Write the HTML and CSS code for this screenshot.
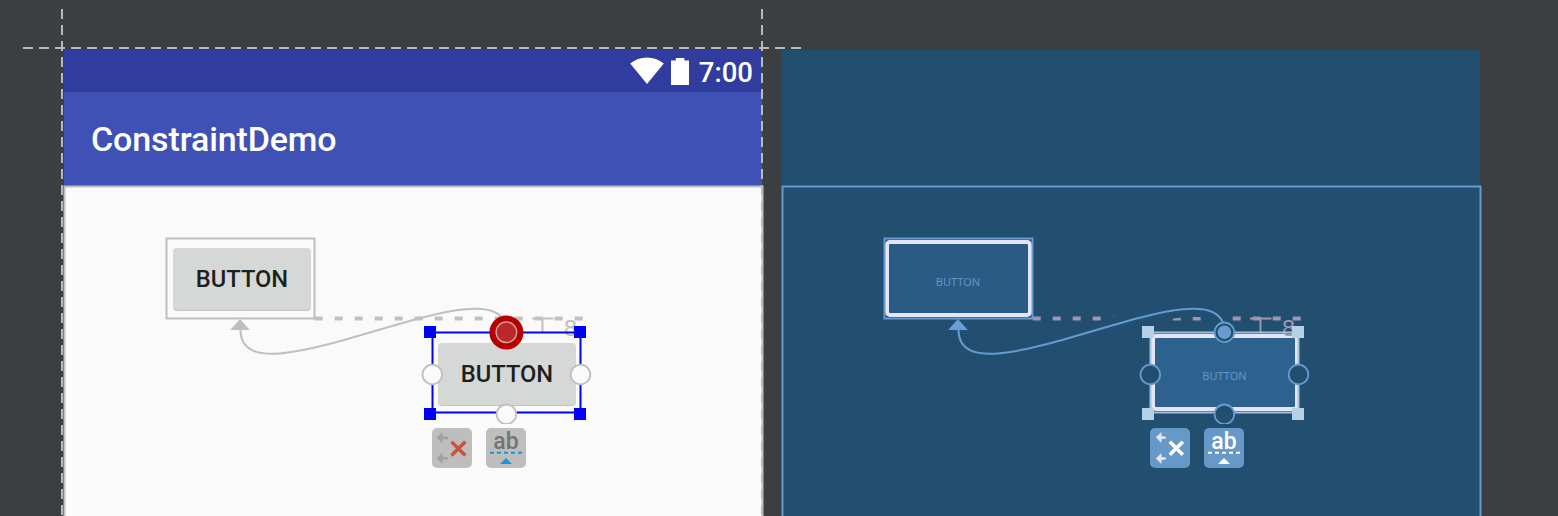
FILE: index.html
```html
<!DOCTYPE html>
<html lang="en">
<head>
<meta charset="utf-8">
<title>ConstraintDemo</title>
<link rel="stylesheet" href="styles.css">
</head>
<body>
<main class="surface">
  <section class="screen design">
    <header class="status-bar">
      <svg class="wifi" width="34" height="28" viewBox="0 0 34 28"><path d="M0.2 6.5 Q7.5 .5 17 .5 Q26.5 .5 33.8 6.5 L17 27Z"/></svg>
      <svg class="battery" width="18" height="28" viewBox="0 0 18 28"><path d="M4.8 1H13.4V3.5H18V28H0V3.5H4.8Z"/></svg>
      <span class="clock">7:00</span>
    </header>
    <div class="app-bar">ConstraintDemo</div>
    <div class="content"></div>
    <div class="widget widget-a">BUTTON</div>
    <div class="widget widget-b">BUTTON</div>
    <svg class="overlay" viewBox="64 50 698 466">
      <clipPath id="anchor-clip"><rect x="490" y="400" width="32" height="24"/></clipPath>
      <rect class="outline" x="64.5" y="186.5" width="698" height="400"/>
      <rect class="outline" x="166.5" y="238.5" width="148" height="80"/>
      <path class="margin" d="M314.7 318.6H583"/>
      <path class="bracket" d="M532 318.6H553.5M542.5 318.6V332"/>
      <text class="margin-value" x="570.5" y="335.5">8</text>
      <path class="curve" d="M506.5 332C506.5 252 240.5 411 240.5 330"/>
      <path class="arrow" d="M240 319L249.8 330H230.2Z"/>
      <rect class="selection" x="432.5" y="332.5" width="148" height="80"/>
      <path class="handle" d="M424 326h12v12h-12zM574 326h12v12h-12zM424 408h12v12h-12zM574 408h12v12h-12z"/>
      <circle class="anchor" cx="432.3" cy="374.5" r="9.8"/>
      <circle class="anchor" cx="580.5" cy="374.5" r="9.8"/>
      <circle class="anchor" cx="506.4" cy="414.3" r="9.8" clip-path="url(#anchor-clip)"/>
      <circle class="target" cx="506.4" cy="332.6" r="14"/>
      <circle class="target-dot" cx="506.4" cy="332.2" r="10.3"/>
    </svg>
    <div class="actions">
      <svg class="action" viewBox="0 0 40 40"><path class="mini" d="M4.5 9.8L10.5 4V8.2L16 9V11.2L10.5 11.4V15.8ZM4.5 30.2L10.5 24.4V28.6L16 29.2V31.4L10.5 31.8V36.2Z"/><path class="cross" d="M19.5 13.8L33.3 27.6M33.3 13.8L19.5 27.6"/></svg>
      <svg class="action" viewBox="0 0 40 40"><text class="ab" x="20" y="21">ab</text><path class="baseline" d="M4 24.8H36"/><path class="caret" d="M20 30L26 36H14Z"/></svg>
    </div>
  </section>
  <section class="screen blueprint">
    <div class="widget widget-a">BUTTON</div>
    <div class="widget widget-b">BUTTON</div>
    <svg class="overlay" viewBox="64 50 698 466">
      <rect class="outline" x="64.5" y="186.5" width="698" height="400"/>
      <rect class="outline" x="166.5" y="238.5" width="148" height="80"/>
      <path class="margin" d="M314.7 318.6H583"/>
      <path class="bracket" d="M532 318.6H553.5M542.5 318.6V332"/>
      <text class="margin-value" x="570.5" y="335.5">8</text>
      <path class="halo" d="M506.5 332C506.5 252 240.5 411 240.5 330"/>
      <path class="curve" d="M506.5 332C506.5 252 240.5 411 240.5 330"/>
      <path class="arrow" d="M240 319L249.8 330H230.2Z"/>
      <rect class="selection" x="432.5" y="332.5" width="148" height="80"/>
      <path class="handle" d="M424 326h12v12h-12zM574 326h12v12h-12zM424 408h12v12h-12zM574 408h12v12h-12z"/>
      <circle class="anchor" cx="432.3" cy="374.5" r="9.8"/>
      <circle class="anchor" cx="580.5" cy="374.5" r="9.8"/>
      <circle class="anchor" cx="506.4" cy="414.3" r="9.8" clip-path="url(#anchor-clip)"/>
      <circle class="anchor" cx="506.4" cy="332.3" r="9.8"/>
      <circle class="target-dot" cx="506.4" cy="332.3" r="6.8"/>
    </svg>
    <div class="actions">
      <svg class="action" viewBox="0 0 40 40"><path class="mini" d="M5.8 9.3L11.5 4V8L16 8.8V10.8L11.5 11V15ZM5.8 30.4L11.5 25V29L16 29.6V31.6L11.5 32V36Z"/><path class="cross" d="M19.8 13.8L32.8 26.8M32.8 13.8L19.8 26.8"/></svg>
      <svg class="action" viewBox="0 0 40 40"><text class="ab" x="20" y="21">ab</text><path class="baseline" d="M4 24.8H36"/><path class="caret" d="M20 30L26 36H14Z"/></svg>
    </div>
  </section>
  <svg class="guides" viewBox="0 0 1558 516"><path d="M62 9V516M762 9V516M23 48H801"/></svg>
</main>
</body>
</html>
```
FILE: styles.css
```css
* { box-sizing: border-box; }
body { margin: 0; background: #3c3f41; font-family: Roboto, sans-serif; }
.surface { position: relative; display: flex; gap: 20px; width: 1558px; height: 516px; padding: 50px 0 0 64px; overflow: hidden; }
.screen { position: relative; display: flex; flex-direction: column; width: 698px; height: 466px; }
.blueprint { background: #224e6f; }
.status-bar { display: flex; justify-content: flex-end; align-items: flex-start; height: 42px; padding: 7px 9px 0 0; background: #303d9e; color: #fff; }
.status-bar svg { fill: #fff; }
.wifi { margin-right: 7px; }
.battery { margin-right: 10px; }
.clock { font-size: 27.5px; font-weight: 500; line-height: 32px; }
.app-bar { display: flex; align-items: center; height: 94px; padding-left: 27px; background: #3f51b5; color: #fff; font-size: 34px; font-weight: 500; letter-spacing: -0.12px; }
.content { flex: 1; background: #fafafa; }
.overlay { position: absolute; top: 0; left: 0; width: 698px; height: 466px; overflow: visible; }
.guides { position: absolute; top: 0; left: 0; width: 1558px; height: 516px; fill: none; stroke: #b9b9b9; stroke-width: 2; stroke-dasharray: 10 6; }
.widget { position: absolute; display: flex; align-items: center; justify-content: center; }
.design .widget { width: 138px; height: 63px; border-radius: 4px; background: #d6d8d7; border-bottom: 1px solid #c2c4c3; color: #1d1f1e; font-size: 23.7px; font-weight: 500; }
.design .widget-a { left: 109px; top: 198px; }
.design .widget-b { left: 374px; top: 293px; }
.blueprint .widget { border: 4px solid #e6e4f8; border-radius: 5px; color: #6196c9; font: 11px "Noto Sans", sans-serif; padding-top: 6px; padding-right: 1px; }
.blueprint .widget-a { left: 103px; top: 190px; width: 147px; height: 77px; background: #2a5b84; }
.blueprint .widget-b { left: 369px; top: 284px; width: 148px; height: 77px; background: #2e628e; }
.outline, .curve, .selection { fill: none; stroke-width: 2; }
.design .outline, .design .curve { stroke: #bfbfbf; }
.blueprint .outline, .blueprint .curve { stroke: #649bd0; }
.margin { fill: none; stroke: #c1c1c1; stroke-width: 4; stroke-dasharray: 8 12; }
.bracket { fill: none; stroke: #c1c1c1; stroke-width: 2; }
.margin-value { fill: #c1c1c1; font: 22px "DejaVu Sans", sans-serif; text-anchor: middle; }
.blueprint .margin, .blueprint .bracket { stroke: #9c95b6; }
.blueprint .margin-value { fill: #9c95b6; }
.halo { fill: none; stroke: #224e6f; stroke-width: 16; }
.arrow { fill: #bfbfbf; }
.blueprint .arrow { fill: #689fd3; }
.selection { stroke: #0000ff; }
.blueprint .selection { stroke: #9fc3de; }
.handle { fill: #0000ff; }
.blueprint .handle { fill: #b5d1e6; }
.anchor { fill: #fafafa; stroke: #bfbfbf; stroke-width: 1.8; }
.blueprint .anchor { fill: #224e6f; stroke: #659bce; }
.target { fill: #b81f21; stroke: #b60000; stroke-width: 6; }
.target-dot { fill: #b9292a; stroke: #d5a5a5; stroke-width: 1.3; }
.blueprint .target-dot { fill: #689cce; stroke: none; }
.actions { position: absolute; left: 368px; top: 378px; display: flex; gap: 14px; }
.action { width: 40px; height: 40px; border-radius: 5px; background: #bebebe; }
.blueprint .action { background: #6699c8; }
.mini { fill: #a2a2a2; }
.cross { fill: none; stroke: #c55541; stroke-width: 3.5; }
.ab { fill: #747474; font: 500 23px Roboto, sans-serif; text-anchor: middle; }
.baseline { fill: none; stroke: #1697da; stroke-width: 2; stroke-dasharray: 4 3; }
.caret { fill: #1697da; }
.blueprint .mini { fill: #e3e8f0; }
.blueprint .cross, .blueprint .baseline { stroke: #fff; }
.blueprint .ab, .blueprint .caret { fill: #fff; }
```
